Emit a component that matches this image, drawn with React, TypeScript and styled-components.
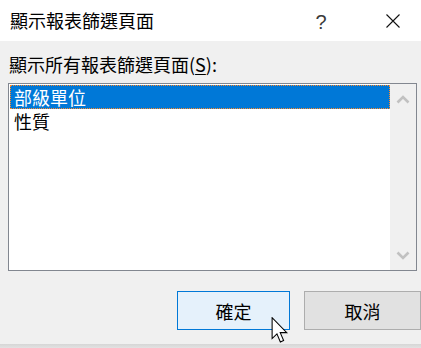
import React, { useState } from 'react';
import styled, { createGlobalStyle } from 'styled-components';

const palette = {
  face: '#f0f0f0',
  text: '#000000',
  border: '#828790',
  select: '#0078d7',
  focus: '#ff8a28',
  arrow: '#c1c1c1',
};

const GlobalStyle = createGlobalStyle`
  html, body {
    margin: 0;
    padding: 0;
    background: ${palette.face};
  }
  body {
    font-family: "Noto Sans CJK TC", "Noto Sans", sans-serif;
  }
`;

const Window = styled.div`
  position: relative;
  width: 421px;
  height: 348px;
  display: flex;
  flex-direction: column;
  overflow: hidden;
  background: ${palette.face};
  color: ${palette.text};
`;

const TitleBar = styled.div`
  height: 41px;
  flex: 0 0 41px;
  display: flex;
  align-items: center;
  background: #ffffff;
`;

const Title = styled.div`
  flex: 1;
  padding-left: 10px;
  font-size: 18px;
  line-height: 24px;
  margin-top: -1px;
`;

const CaptionButton = styled.div<{ $edge?: boolean }>`
  width: 72px;
  height: 41px;
  flex: 0 0 72px;
  display: flex;
  align-items: center;
  justify-content: center;
  margin-right: ${(p) => (p.$edge ? '-8px' : '0')};
`;

const HelpGlyph = styled.span`
  font-family: "Liberation Sans", sans-serif;
  font-size: 20px;
  line-height: 20px;
  color: #3a3a3a;
  margin-top: 3px;
`;

const Body = styled.div`
  flex: 1;
  display: flex;
  flex-direction: column;
  padding: 11px 0 0 8px;
`;

const Label = styled.div`
  font-size: 18px;
  line-height: 24px;
  padding-left: 1px;
  height: 24px;

  u {
    text-underline-offset: 2px;
  }
`;

const ListBox = styled.div`
  margin-top: 7px;
  width: 409px;
  height: 188px;
  box-sizing: border-box;
  border: 1px solid ${palette.border};
  background: #ffffff;
  display: flex;
`;

const Items = styled.ul`
  flex: 1;
  margin: 0;
  padding: 1px 0 0 1px;
  list-style: none;
`;

const Item = styled.li<{ $selected?: boolean }>`
  height: 24px;
  box-sizing: border-box;
  padding-left: 3px;
  font-size: 18px;
  line-height: 22px;
  cursor: default;
  background: ${(p) => (p.$selected ? palette.select : 'transparent')};
  color: ${(p) => (p.$selected ? '#ffffff' : palette.text)};
  border: 1px ${(p) => (p.$selected ? 'dotted' : 'solid')}
    ${(p) => (p.$selected ? palette.focus : 'transparent')};
`;

const ScrollBar = styled.div`
  width: 26px;
  flex: 0 0 26px;
  background: ${palette.face};
  display: flex;
  flex-direction: column;
  justify-content: space-between;
`;

const ArrowButton = styled.div`
  height: 30px;
  display: flex;
  align-items: center;
  justify-content: center;
`;

const ButtonRow = styled.div`
  display: flex;
  justify-content: flex-end;
  gap: 14px;
  margin-top: 20px;
`;

const DialogButton = styled.button<{ $primary?: boolean; $width: number }>`
  width: ${(p) => p.$width}px;
  height: 39px;
  margin: 0;
  padding: 0;
  font-family: "Noto Sans CJK TC", sans-serif;
  font-size: 18px;
  color: ${palette.text};
  background: ${(p) => (p.$primary ? '#e5f1fb' : '#e1e1e1')};
  border: 1px solid ${(p) => (p.$primary ? palette.select : '#adadad')};
  outline: none;
`;

const BottomEdge = styled.div`
  height: 4px;
  flex: 0 0 4px;
  background: linear-gradient(#d6d6d6, #e2e2e2);
`;

const Pointer = styled.svg`
  position: absolute;
  left: 271px;
  top: 317px;
  pointer-events: none;
`;

const Chevron: React.FC<{ down?: boolean }> = ({ down }) => (
  <svg width="14" height="9" viewBox="0 0 14 9">
    <polyline
      points={down ? '1.5,1.5 7,7 12.5,1.5' : '1.5,7.5 7,2 12.5,7.5'}
      fill="none"
      stroke={palette.arrow}
      strokeWidth="2.6"
    />
  </svg>
);

const App: React.FC = () => {
  const [selected, setSelected] = useState(0);
  const pages = ['部級單位', '性質'];

  return (
    <>
      <GlobalStyle />
      <Window>
        <TitleBar>
          <Title>顯示報表篩選頁面</Title>
          <CaptionButton>
            <HelpGlyph>?</HelpGlyph>
          </CaptionButton>
          <CaptionButton $edge>
            <svg width="14" height="14" viewBox="0 0 14 14">
              <path d="M0.5 0.5 L13.5 13.5 M13.5 0.5 L0.5 13.5" stroke="#111" strokeWidth="1.1" />
            </svg>
          </CaptionButton>
        </TitleBar>

        <Body>
          <Label>
            顯示所有報表篩選頁面(<u>S</u>):
          </Label>
          <ListBox>
            <Items>
              {pages.map((page, index) => (
                <Item key={page} $selected={index === selected} onClick={() => setSelected(index)}>
                  {page}
                </Item>
              ))}
            </Items>
            <ScrollBar>
              <ArrowButton>
                <Chevron />
              </ArrowButton>
              <ArrowButton>
                <Chevron down />
              </ArrowButton>
            </ScrollBar>
          </ListBox>
          <ButtonRow>
            <DialogButton type="button" $primary $width={113}>
              確定
            </DialogButton>
            <DialogButton type="button" $width={117}>
              取消
            </DialogButton>
          </ButtonRow>
        </Body>
        <BottomEdge />

        {/* mouse pointer resting on the OK button */}
        <Pointer width="20" height="27" viewBox="0 0 13.5 19">
          <path
            d="M0.5 0.5 V15.2 L3.9 11.9 L6.3 17.6 L8.6 16.6 L6.2 11 H10.8 Z"
            fill="#ffffff"
            stroke="#000000"
            strokeWidth="0.75"
            strokeLinejoin="miter"
          />
        </Pointer>
      </Window>
    </>
  );
};

export default App;
